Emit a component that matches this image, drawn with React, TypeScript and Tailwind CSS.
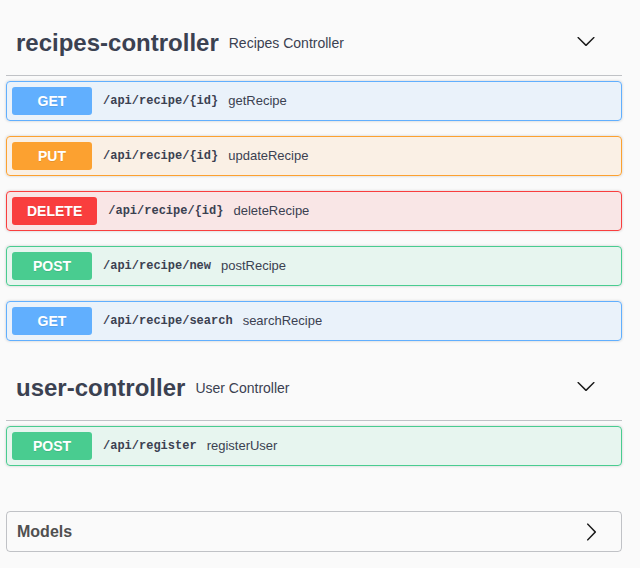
import React from 'react';

type Method = 'GET' | 'PUT' | 'DELETE' | 'POST';

type Operation = {
  method: Method;
  path: string;
  summary: string;
};

type Tag = {
  name: string;
  description: string;
  operations: Operation[];
};

const blockStyles: Record<Method, { block: string; badge: string }> = {
  GET: { block: 'border-[#61affe] bg-[#61affe]/10', badge: 'bg-[#61affe]' },
  PUT: { block: 'border-[#fca130] bg-[#fca130]/10', badge: 'bg-[#fca130]' },
  DELETE: { block: 'border-[#f93e3e] bg-[#f93e3e]/10', badge: 'bg-[#f93e3e]' },
  POST: { block: 'border-[#49cc90] bg-[#49cc90]/10', badge: 'bg-[#49cc90]' },
};

const tags: Tag[] = [
  {
    name: 'recipes-controller',
    description: 'Recipes Controller',
    operations: [
      { method: 'GET', path: '/api/recipe/{id}', summary: 'getRecipe' },
      { method: 'PUT', path: '/api/recipe/{id}', summary: 'updateRecipe' },
      { method: 'DELETE', path: '/api/recipe/{id}', summary: 'deleteRecipe' },
      { method: 'POST', path: '/api/recipe/new', summary: 'postRecipe' },
      { method: 'GET', path: '/api/recipe/search', summary: 'searchRecipe' },
    ],
  },
  {
    name: 'user-controller',
    description: 'User Controller',
    operations: [{ method: 'POST', path: '/api/register', summary: 'registerUser' }],
  },
];

function ArrowDown() {
  return (
    <svg className="mb-[4px] mr-[26px] ml-auto h-5 w-5" viewBox="0 0 20 20" fill="#1a1a1a" aria-hidden="true">
      <path d="M17.418 6.109c.272-.268.709-.268.979 0s.271.701 0 .969l-7.908 7.83c-.27.268-.707.268-.979 0l-7.908-7.83c-.27-.268-.27-.701 0-.969.271-.268.709-.268.979 0L10 13.25l7.418-7.141z" />
    </svg>
  );
}

function ArrowRight() {
  return (
    <svg className="ml-auto mr-[20px] h-5 w-5" viewBox="0 0 20 20" fill="#1a1a1a" aria-hidden="true">
      <path d="M13.25 10L6.109 2.58c-.268-.27-.268-.707 0-.979.268-.27.701-.27.969 0l7.83 7.908c.268.271.268.709 0 .979l-7.83 7.908c-.268.271-.701.27-.969 0-.268-.269-.268-.707 0-.979L13.25 10z" />
    </svg>
  );
}

function OperationBlock({ method, path, summary }: Operation) {
  const styles = blockStyles[method];

  return (
    <div
      className={`mb-[15px] flex h-[40px] items-center rounded-[4px] border px-[5px] shadow-[0_0_3px_rgba(0,0,0,0.19)] ${styles.block}`}
    >
      <span
        className={`min-w-[80px] rounded-[3px] px-[15px] py-[6px] text-center text-[14px] font-bold leading-[16px] text-white [text-shadow:0_1px_0_rgba(0,0,0,0.1)] ${styles.badge}`}
      >
        {method}
      </span>
      <span className="pl-[11px] pr-[10px] font-['Liberation_Mono',monospace] text-[12px] font-bold text-[#3b4151]">
        {path}
      </span>
      <span className="text-[13px] text-[#3b4151]">{summary}</span>
    </div>
  );
}

function TagSection({ name, description, operations }: Tag) {
  return (
    <div>
      <div className="flex h-[65px] items-center border-b border-[#3b4151]/30 pl-[10px]">
        <h3 className="text-[24px] font-bold text-[#3b4151]">{name}</h3>
        <small className="ml-[10px] text-[14px] text-[#3b4151]">{description}</small>
        <ArrowDown />
      </div>
      <div className="pt-[5px]">
        {operations.map((op, i) => (
          <OperationBlock key={i} {...op} />
        ))}
      </div>
    </div>
  );
}

export default function App() {
  return (
    <div className="min-h-[568px] bg-[#fafafa] font-['Liberation_Sans',Arial,sans-serif]">
      <div className="ml-[6px] w-[616px] pt-[11px]">
        {tags.map((tag) => (
          <TagSection key={tag.name} {...tag} />
        ))}

        <div className="mt-[45px] flex h-[41px] items-center rounded-[4px] border border-[#3b4151]/30 pl-[10px]">
          <h4 className="text-[16px] font-bold text-[#505050]">Models</h4>
          <ArrowRight />
        </div>
      </div>
    </div>
  );
}
